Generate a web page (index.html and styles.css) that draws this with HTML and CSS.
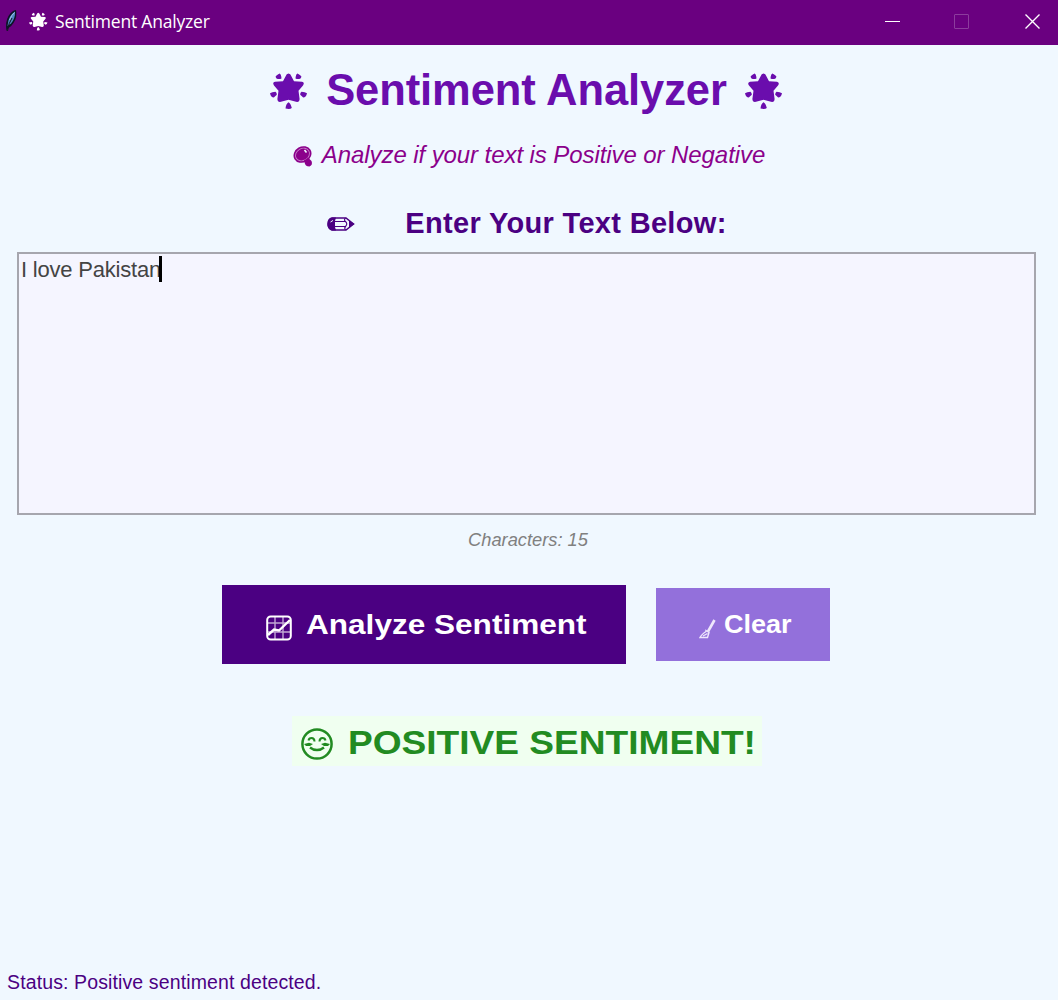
FILE: index.html
```html
<!DOCTYPE html>
<html lang="en">
<head>
<meta charset="utf-8">
<title>Sentiment Analyzer</title>
<link rel="stylesheet" href="styles.css">
</head>
<body>
<svg width="0" height="0" class="defs" aria-hidden="true">
  <symbol id="star" viewBox="0 0 38 38">
    <path d="M18.500 1.500 Q20.500 1.500 21.500 4.500 L24 9.300 L32 9.800 Q35 10.500 33 13.500 L28.500 18.800 L29.600 27 Q29.500 30.500 26 29.800 L18.500 27.800 L11 29.800 Q7.500 30.500 7.400 27 L8.500 18.800 L4 13.500 Q2 10.500 5 9.800 L13 9.300 L15.500 4.500 Q16.500 1.500 18.500 1.500Z"/>
    <path d="M5.500 4.800 Q6 3.500 9.500 1.500 Q11.200 2 11.500 6.500 Q9 7.500 6.500 6.500Z M31.500 4.800 Q31 3.500 27.500 1.500 Q25.800 2 25.500 6.500 Q28 7.500 30.500 6.500Z M0 21.200 Q2 20 5.500 19.800 Q7 21 6.800 22.800 L3.800 25.500 Q1 25.500 0 21.200Z M37 21.200 Q35 20 31.500 19.800 Q30 21 30.200 22.800 L33.200 25.500 Q36 25.500 37 21.200Z M18.500 30.200 Q20.500 31 21.800 36 Q20 37.500 15.500 36.500 Q16 31.500 18.500 30.200Z"/>
  </symbol>
</svg>

<header class="titlebar">
  <svg class="feather" viewBox="0 0 14 24"><path d="M2.500 22 Q1 13 4.500 7 Q8 1.500 12 1 Q13.500 8 9.500 14 Q7 18 4.500 19Z" fill="#0b1426"/><path d="M3.500 17 Q4 7 11 2.500 Q11.500 9 7 14.500Z" fill="#4f86c4"/><path d="M3.500 22 Q4.500 14 8 9" stroke="#101522" fill="none"/><path d="M5.500 11 Q7.500 6 10.500 3.500" stroke="#a5c8e8" fill="none"/></svg>
  <svg class="bar-star"><use href="#star"/></svg>
  <span class="bar-title">Sentiment Analyzer</span>
  <div class="controls">
    <svg viewBox="0 0 16 16"><path d="M0 7.500H15" stroke="#fff"/></svg>
    <svg viewBox="0 0 16 16"><rect x=".5" y=".5" width="14" height="14" rx=".5" stroke="#8c3c9d" fill="none"/></svg>
    <svg viewBox="0 0 16 16"><path d="M.5 .5 L14.500 14.500 M14.500 .5 L.5 14.500" stroke="#fff" stroke-width="1.400"/></svg>
  </div>
</header>

<main class="app">
  <h1 class="heading"><svg><use href="#star"/></svg><span>Sentiment Analyzer</span><svg><use href="#star"/></svg></h1>

  <p class="subtitle">
    <svg viewBox="0 0 20 22"><ellipse cx="9.500" cy="9.500" rx="9.300" ry="8" transform="rotate(-30 9.500 9.500)" fill="#8b008b"/><ellipse cx="9.500" cy="9.500" rx="7.300" ry="6" transform="rotate(-30 9.500 9.500)" fill="none" stroke="#c77fcb" stroke-width=".9"/><path d="M11.500 5 L13.500 7.500" stroke="#f0f8ff" stroke-width="1.600"/><path d="M11 15 Q14 14.500 15 12.500 L18.500 16 Q20 20 16.500 21.500 Q12 21.500 11.500 17Z" fill="#8b008b"/></svg>
    <span>Analyze if your text is Positive or Negative</span>
  </p>

  <div class="label">
    <svg viewBox="0 0 28 16"><path d="M5 2 H19 L26.500 8 L19 14 H5 Q1 12.500 1 8 Q1 3 5 2Z" fill="none" stroke="#4b0082" stroke-width="1.500"/><path d="M5 1.500 H9 L8 5 V11 L9 14.500 H5 Q0 12 .5 8 Q1 3 5 1.500Z M22 4.500 L27.500 8 L22 11.500Z" fill="#4b0082"/><path d="M8 5.500 H18 M8 10.500 H18 M18.500 2 Q16.500 4 18.500 5.500 Q21 8 18.500 10.500 Q17 12 18.500 14" fill="none" stroke="#4b0082" stroke-width="1.100"/><path d="M3.500 6 L6 4.500" stroke="#f0f8ff"/></svg>
    <span>Enter Your Text Below:</span>
  </div>

  <div class="textbox"><span>I love Pakistan</span><i class="caret"></i></div>
  <p class="count">Characters: 15</p>

  <div class="actions">
    <button class="analyze">
      <svg viewBox="0 0 26 26" fill="none" stroke="#fff"><path d="M9 2V24M17 2V24M2 8H24M2 17H24" stroke-opacity=".65" stroke-width="1.400"/><rect x="1.200" y="1.500" width="23.600" height="23" rx="3.500" stroke-width="2"/><path d="M2 20 L8 14.500 L13 15.500 L24 5" stroke-width="2.400"/></svg>
      <span>Analyze Sentiment</span>
    </button>
    <button class="clear">
      <svg viewBox="0 0 17 20" fill="none" stroke="#eee6fc"><path d="M15.500 1 L9 12.500" stroke-width="2.600"/><path d="M7 11.500 L10 13.500 L8.500 18.500 H1 Q2 16 7 12.500Z M4 17 L8.500 14.500" stroke-width="1.400"/></svg>
      <span>Clear</span>
    </button>
  </div>

  <div class="result">
    <svg viewBox="0 0 32 32" fill="none" stroke="#228b22"><circle cx="16" cy="16" r="14.600" stroke-width="2.500"/><path d="M7.500 12.500 Q8 10 10.500 10 Q13.500 10 13.500 13.500 M18.500 13.500 Q18.500 10 21.500 10 Q24 10 24.500 12.500" stroke-width="2"/><path d="M9 19.500 Q12 22 16 22 Q20 22 23 19.500" stroke-width="2.300"/><path d="M3 16 L8 14.800 L12 16 L9 18 H5Z M29 16 L24 14.800 L20 16 L23 18 H27Z" fill="#228b22" stroke="none"/></svg>
    <span>POSITIVE SENTIMENT!</span>
  </div>

  <footer class="status">Status: Positive sentiment detected.</footer>
</main>
</body>
</html>
```
FILE: styles.css
```css
* { box-sizing: border-box; }
body {
  margin: 0;
  width: 1058px;
  height: 1000px;
  display: flex;
  flex-direction: column;
  overflow: hidden;
  background: #f0f8ff;
  font-family: "Liberation Sans", Arial, sans-serif;
}
h1, p { margin: 0; }
svg { display: block; flex: none; }
span { white-space: nowrap; }
.defs { display: none; }

.titlebar {
  height: 45px;
  flex: none;
  display: flex;
  align-items: center;
  padding: 0 17px 3px 4px;
  background: #6a0080;
  color: #fff;
}
.feather { width: 14px; height: 24px; margin-right: 11px; }
.bar-star { width: 19px; height: 19px; fill: #fff; }
.bar-title {
  margin-left: 7px;
  font: 17.500px "Open Sans", "Noto Sans", sans-serif;
  letter-spacing: -.2px;
}
.controls { margin: 2px 0 0 auto; display: flex; gap: 54px; }
.controls svg { width: 16px; height: 16px; }
.controls svg:nth-child(2) { margin: 0 1px 0 -1px; }

.app { flex: 1; display: flex; flex-direction: column; align-items: center; }
.heading {
  height: 74px;
  margin: 8px 5px 0 0;
  width: 514px;
  display: flex;
  align-items: center;
  justify-content: space-between;
  font-size: 43.500px;
  line-height: 74px;
  letter-spacing: -.08px;
  color: #6a0dad;
}
.heading svg { width: 38px; height: 38px; margin-top: 2px; fill: #6a0dad; }

.subtitle {
  height: 40px;
  margin-top: 8px;
  display: flex;
  align-items: center;
  gap: 9px;
  font-size: 24px;
  font-style: italic;
  letter-spacing: -.08px;
  color: #8b008b;
}
.subtitle svg { width: 20px; height: 22px; margin-top: 2px; }

.label {
  height: 40px;
  margin: 28px 4px 0 0;
  display: flex;
  align-items: center;
  gap: 50px;
  font-size: 29px;
  font-weight: bold;
  letter-spacing: .32px;
  color: #4b0082;
}
.label svg { width: 28px; height: 16px; margin-top: 2px; }

.textbox {
  width: 1019px;
  height: 263px;
  margin: 9px 5px 0 0;
  padding: 2px;
  display: flex;
  align-items: flex-start;
  border: 2px solid #a6a6ae;
  background: #f5f5ff;
  font-size: 22px;
  line-height: 28px;
  letter-spacing: -.2px;
  color: #444;
}
.caret { width: 3px; height: 26px; margin-left: -2px; background: #000; }

.count {
  margin: 14px 2px 0 0;
  height: 22px;
  font-size: 18.300px;
  line-height: 22px;
  font-style: italic;
  color: #808080;
}

.actions {
  height: 80px;
  margin: 33px 6px 0 0;
  display: flex;
  align-items: center;
  gap: 30px;
}
button {
  display: flex;
  align-items: center;
  border: 0;
  padding: 0;
  font: bold 28px "Liberation Sans", Arial, sans-serif;
  color: #fff;
}
button span, .result span { display: block; transform-origin: left center; }
.analyze { width: 404px; height: 79px; padding-left: 44px; gap: 14px; background: #4b0082; }
.analyze svg { width: 26px; height: 26px; margin-top: 7px; }
.analyze span { transform: scaleX(1.127); margin-top: 1px; }
.clear { width: 174px; height: 73px; padding-left: 43px; gap: 8px; background: #9370db; font-size: 25px; }
.clear svg { width: 17px; height: 20px; margin-top: 10px; }
.clear span { transform: scaleX(1.08); margin-top: 1px; }

.result {
  width: 470px;
  height: 50px;
  margin: 52px 5px 0 0;
  padding-left: 9px;
  display: flex;
  align-items: center;
  gap: 15px;
  background: #f0fff0;
  color: #228b22;
  font-size: 33.500px;
  font-weight: bold;
}
.result svg { width: 32px; height: 32px; margin-top: 5px; }
.result span { transform: scaleX(1.107); margin-top: 3px; }

.status {
  align-self: flex-start;
  margin: auto 0 7px 7px;
  font-size: 19.500px;
  line-height: 22px;
  letter-spacing: .12px;
  color: #4b0082;
}
```
